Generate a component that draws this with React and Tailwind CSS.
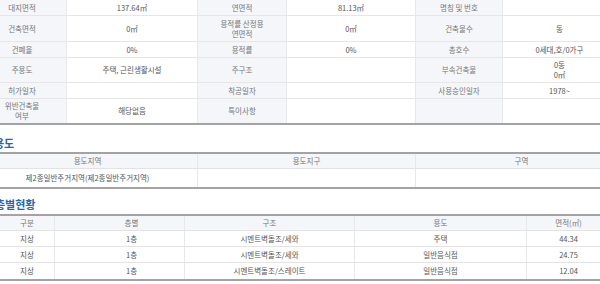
import React from 'react';

const font = { fontFamily: '"Noto Sans CJK KR", "Noto Sans", sans-serif' };

const topRows = [
    { h: 'h-[16px]', cells: ['대지면적', '137.64㎡', '연면적', '81.13㎡', '명칭 및 번호', ''] },
    { h: 'h-[26px]', cells: ['건축면적', '0㎡', '용적률 산정용\n연면적', '0㎡', '건축물수', '동'] },
    { h: 'h-[16px]', cells: ['건폐율', '0%', '용적률', '0%', '총호수', '0세대,호/0가구'] },
    { h: 'h-[25px]', cells: ['주용도', '주택, 근린생활시설', '주구조', '', '부속건축물', '0동\n0㎡'] },
    { h: 'h-[16px]', cells: ['허가일자', '', '착공일자', '', '사용승인일자', '1978~'] },
    { h: 'h-[24px]', cells: ['위반건축물\n여부', '해당없음', '특이사항', '', '', ''] },
];

const floors = [
    ['지상', '1층', '시멘트벽돌조/세와', '주택', '44.34'],
    ['지상', '1층', '시멘트벽돌조/세와', '일반음식점', '24.75'],
    ['지상', '1층', '시멘트벽돌조/스레이트', '일반음식점', '12.04'],
];

const Cell = ({ children, label, className = '' }) => (
    <div
        className={`flex items-center justify-center text-center whitespace-pre-line leading-[10px] border-r border-[#e6e8ec] ${label ? 'bg-[#f4f6f9] text-[#777]' : 'bg-white text-[#555]'} ${className}`}
    >
        {children}
    </div>
);

const App = () => {
    return (
        <div className="w-[600px] h-[284px] overflow-hidden bg-white text-[7.5px]" style={font}>
            <div className="-ml-[22px] w-[660px]">
                {/* 건축물 개요 */}
                <div className="border-b-2 border-[#a3a3a3]">
                    {topRows.map((r, i) => (
                        <div key={i} className={`grid grid-cols-[89px_131px_89px_129px_87px_114px] ${r.h} border-b border-[#e6e6e6] last:border-b-0`}>
                            {r.cells.map((c, j) => (
                                <Cell key={j} label={j % 2 === 0}>{c}</Cell>
                            ))}
                        </div>
                    ))}
                </div>

                {/* 용도 */}
                <h3 className="mt-[12px] ml-[16px] h-[14px] leading-[13px] text-[11px] font-bold text-[#2766b0]">용도</h3>
                <div className="mt-[1px] w-[650px] border-t-2 border-b-2 border-[#a3a3a3]">
                    <div className="grid grid-cols-[220px_218px_212px] h-[15px] border-b border-[#e3e3e3]">
                        <Cell label>용도지역</Cell>
                        <Cell label>용도지구</Cell>
                        <Cell label>구역</Cell>
                    </div>
                    <div className="grid grid-cols-[220px_218px_212px] h-[18px]">
                        <Cell>제2종일반주거지역(제2종일반주거지역)</Cell>
                        <Cell></Cell>
                        <Cell></Cell>
                    </div>
                </div>

                {/* 층별현황 */}
                <h3 className="mt-[9px] ml-[17px] h-[14px] leading-[13px] text-[11px] font-bold text-[#2766b0]">층별현황</h3>
                <div className="mt-[2px] ml-[22px] w-[611px] border-t-2 border-b-2 border-[#a3a3a3]">
                    <div className="grid grid-cols-[55px_130px_170px_172px_84px] h-[15px] border-b border-[#e3e3e3]">
                        <Cell label>구분</Cell>
                        <Cell label className="pl-[24px]">층별</Cell>
                        <Cell label>구조</Cell>
                        <Cell label>용도</Cell>
                        <Cell label>면적(㎡)</Cell>
                    </div>
                    {floors.map((f, i) => (
                        <div key={i} className="grid grid-cols-[55px_130px_170px_172px_84px] h-[16px] border-b border-[#e3e3e3] last:border-b-0">
                            <Cell>{f[0]}</Cell>
                            <Cell className="pl-[24px]">{f[1]}</Cell>
                            <Cell>{f[2]}</Cell>
                            <Cell>{f[3]}</Cell>
                            <Cell>{f[4]}</Cell>
                        </div>
                    ))}
                </div>
            </div>
        </div>
    );
};

export default App;
